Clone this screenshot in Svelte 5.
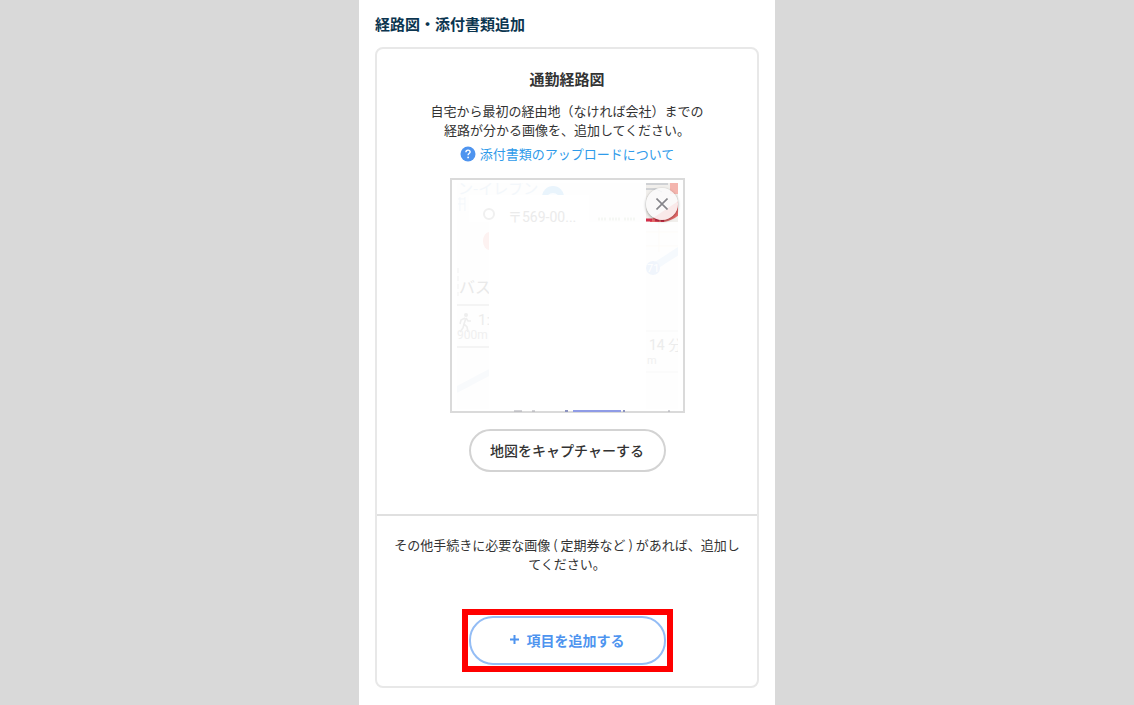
<script>
  let captured = $state(true);
</script>

<main class="page">
  <div class="panel">
    <h1 class="heading">経路図・添付書類追加</h1>

    <div class="card">
      <section class="section route">
        <h2 class="title">通勤経路図</h2>
        <p class="text">
          自宅から最初の経由地（なければ会社）までの<br />経路が分かる画像を、追加してください。
        </p>
        <a class="help" href="#upload">
          <svg width="16" height="16" viewBox="0 0 16 16" aria-hidden="true">
            <circle cx="8" cy="8" r="7.5" fill="#4e94ef" />
            <path
              d="M5.9 6.3C5.9 4.9 6.8 4.1 8 4.1s2.1.8 2.1 1.9c0 1.5-2 1.6-2 3.2"
              fill="none"
              stroke="#fff"
              stroke-width="1.4"
            />
            <circle cx="8.1" cy="11.4" r=".9" fill="#fff" />
          </svg>
          <span>添付書類のアップロードについて</span>
        </a>

        <div class="preview">
          {#if captured}
            <svg class="map" viewBox="0 0 231 231" role="img" aria-label="経路図">
              <defs>
                <clipPath id="left"><rect x="5" y="3" width="32" height="226" /></clipPath>
                <clipPath id="right"><rect x="194" y="3" width="32" height="226" /></clipPath>
                <clipPath id="top"><rect x="5" y="3" width="189" height="12" /></clipPath>
                <clipPath id="photo"><rect x="194" y="3" width="32" height="39" /></clipPath>
              </defs>

              <rect x="5" y="3" width="189" height="39" fill="#fefefe" />
              <rect x="17" y="15" width="120" height="27" fill="#fff" />
              <g clip-path="url(#top)">
                <text x="6" y="14" font-size="15" fill="#f3f7fb">ン-イレブン</text>
                <circle cx="101" cy="17" r="11" fill="#e9f4fc" />
                <circle cx="101" cy="20" r="7" fill="#fbfdff" />
              </g>
              <path d="M6 19h7M6 24h7M8 17v14M13 17v14" stroke="#f3f7fb" />
              <circle cx="37" cy="34" r="5" fill="none" stroke="#f0f0f0" stroke-width="2" />
              <text class="latin" x="56" y="42" font-size="14" fill="#ebebeb">〒569-00...</text>
              <path
                d="M146 39h8M157 39h12M172 39h12"
                stroke="#f5f7f4"
                stroke-width="3"
                stroke-dasharray="2 1"
              />

              <g clip-path="url(#left)">
                <rect x="5" y="42" width="32" height="187" fill="#fefefe" />
                <ellipse cx="37" cy="61" rx="6" ry="9" fill="#fdf2f1" />
                <path d="M6 88v28" stroke="#f2f2f2" stroke-dasharray="5 3" />
                <text x="7" y="113" font-size="16" fill="#e9e9e9">バス</text>
                <path d="M5 125h32M5 167h32" stroke="#f4f4f4" stroke-width="2" />
                <circle cx="14" cy="135" r="2" fill="#eee" />
                <path
                  d="M14 138l-2 6-1 4-3 4M13 138l-4 2-1 4M12 144l3 3 1 5M14 138l2 3h3"
                  fill="none"
                  stroke="#eee"
                  stroke-width="1.6"
                />
                <text class="latin" x="26" y="145" font-size="15" fill="#ececec">1:</text>
                <text class="latin" x="5" y="159" font-size="12" fill="#f0f0f0">900m</text>
                <path d="M4 210L38 192" stroke="#f8fafc" stroke-width="6" />
              </g>

              <g clip-path="url(#right)">
                <rect x="194" y="42" width="32" height="187" fill="#fefefe" />
                <path d="M194 52h32M194 66h32M207 42v30" stroke="#fdfbf8" />
                <path d="M200 88L228 70" stroke="#f5f9fd" stroke-width="7" />
                <circle cx="201" cy="88" r="7" fill="#f0f5fc" />
                <text class="latin" x="195" y="92" font-size="11" fill="#fff">71</text>
                <path d="M194 151h32M194 192h32" stroke="#f8f8f8" />
                <text class="latin" x="197" y="170" font-size="14" fill="#ececec">14 分</text>
                <text class="latin" x="195" y="184" font-size="11" fill="#f0f0f0">m</text>
              </g>

              <g clip-path="url(#photo)">
                <rect x="194" y="3" width="32" height="39" fill="#f1efec" />
                <path d="M194 4h22M194 9h10l6 3" fill="none" stroke="#aeb4bd" />
                <path d="M218 2h9v12h-9z" fill="#f4b5ae" />
                <path d="M198 40L228 20v14q-6 6-16 8h-14z" fill="#e86c6c" />
                <path d="M194 40h6M203 40h4M209 41h3" stroke="#d32f4b" stroke-width="3" />
              </g>

              <path d="M62 231h8M80 231h3M216 231h2" stroke="#a6a6ae" stroke-width="1" />
              <path d="M121 231h48" stroke="#8f9be6" stroke-width="2" />
              <path d="M113 231h3M171 231h2" stroke="#8c93c0" stroke-width="2" />
            </svg>
            <button
              class="close"
              type="button"
              aria-label="削除"
              onclick={() => (captured = false)}
            >
              <svg width="12" height="12" viewBox="0 0 12 12" aria-hidden="true">
                <path d="M.5.5l11 11M11.500.5l-11 11" stroke="#85858a" stroke-width="1.6" />
              </svg>
            </button>
          {/if}
        </div>

        <button class="button" type="button" onclick={() => (captured = true)}>
          地図をキャプチャーする
        </button>
      </section>

      <section class="section other">
        <p class="text">
          その他手続きに必要な画像 ( 定期券など ) があれば、追加してください。
        </p>
        <div class="highlight">
          <button class="button add" type="button">
            <svg width="9" height="9" viewBox="0 0 9 9" aria-hidden="true">
              <path d="M4.500 0v9M0 4.500h9" stroke="currentColor" stroke-width="2" />
            </svg>
            項目を追加する
          </button>
        </div>
      </section>
    </div>
  </div>
</main>

<style>
  :global(body) {
    background: #d9d9d9;
  }

  .page {
    display: flex;
    justify-content: center;
    min-height: 100vh;
    font-family: "Noto Sans CJK JP", "Noto Sans", sans-serif;
    color: #333;
  }

  .panel {
    box-sizing: border-box;
    width: 100%;
    max-width: 416px;
    padding: 13px 16px 16px;
    background: #fff;
  }

  .heading {
    margin: 0 0 13px;
    font-size: 15px;
    line-height: 21px;
    color: #0b3550;
  }

  .card {
    border: 2px solid #e8e8e8;
    border-radius: 8px;
  }

  .section {
    display: flex;
    flex-direction: column;
    align-items: center;
    padding: 19px 14px;
  }

  .route {
    padding-bottom: 42px;
    border-bottom: 2px solid #e0e0e0;
  }

  .title {
    margin: 0 0 11px;
    font-size: 15px;
    line-height: 22px;
  }

  .text {
    margin: 0;
    font-size: 13px;
    line-height: 19px;
    text-align: center;
  }

  .help {
    display: flex;
    align-items: center;
    gap: 4px;
    margin: 5px 0 14px;
    font-size: 13px;
    line-height: 20px;
    color: #2f9bea;
    text-decoration: none;
  }

  .preview {
    position: relative;
    box-sizing: border-box;
    width: 235px;
    max-width: 100%;
    aspect-ratio: 1;
    margin-bottom: 16px;
    border: 2px solid #dadada;
  }

  .map {
    display: block;
    width: 100%;
    overflow: visible;
  }

  .latin {
    font-family: Roboto, "Noto Sans CJK JP", sans-serif;
  }

  .close {
    position: absolute;
    top: 8px;
    right: 5px;
    display: flex;
    align-items: center;
    justify-content: center;
    width: 32px;
    height: 32px;
    padding: 0;
    border: 0;
    border-radius: 50%;
    background: rgb(250 250 250 / 0.88);
    box-shadow: 0 1px 3px rgb(0 0 0 / 0.4);
    cursor: pointer;
  }

  .button {
    display: flex;
    align-items: center;
    justify-content: center;
    gap: 8px;
    width: 197px;
    height: 43px;
    padding: 0 0 2px;
    border: 2px solid #d3d3d3;
    border-radius: 24px;
    background: #fff;
    font: inherit;
    font-size: 14px;
    font-weight: 500;
    color: #333;
    cursor: pointer;
  }

  .other {
    padding-bottom: 14px;
  }

  .highlight {
    margin-top: 36px;
    padding: 1px;
    border: 6px solid #f00;
  }

  .add {
    height: 49px;
    border-color: #94bdf5;
    font-weight: 700;
    color: #4e94ef;
  }
</style>
